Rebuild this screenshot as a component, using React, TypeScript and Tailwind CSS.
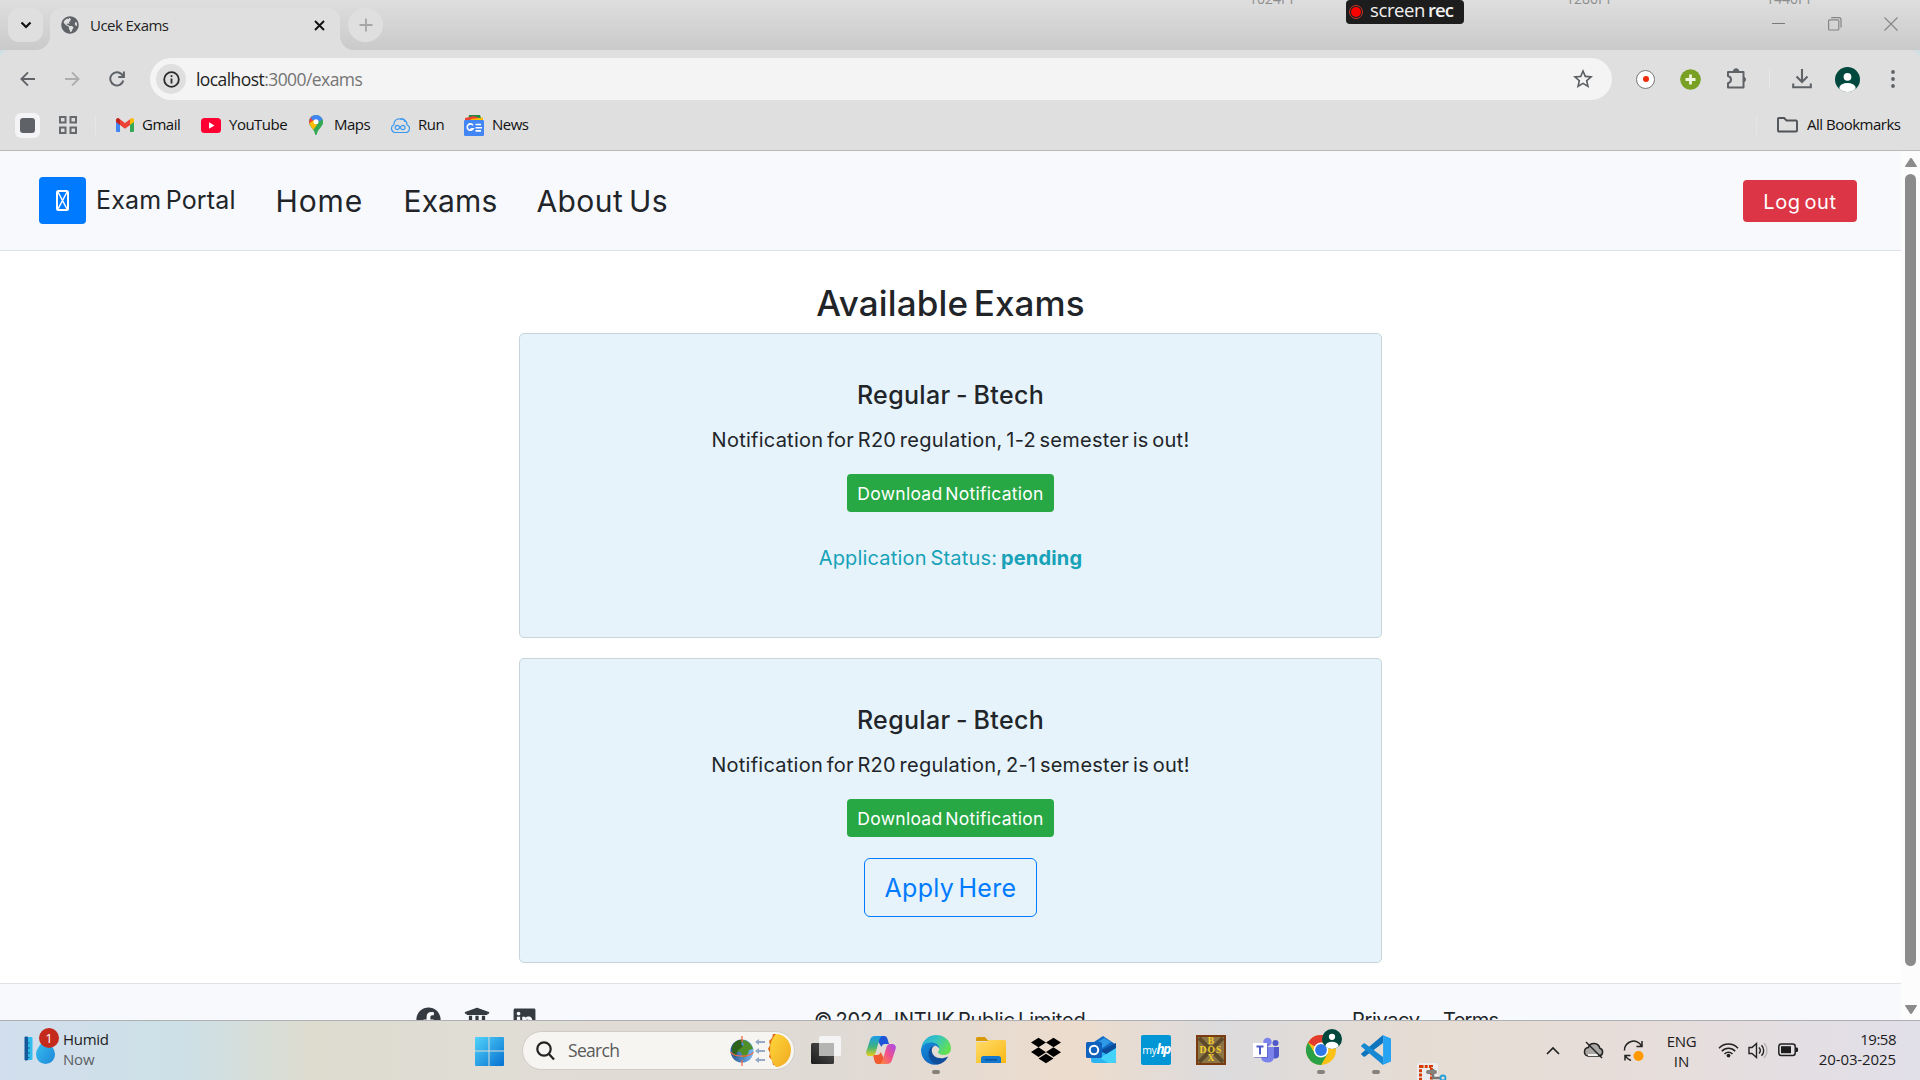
import React from "react";
import type { ReactNode } from "react";
import { FaFacebook, FaLinkedin, FaDropbox, FaUniversity, FaGlobeAmericas } from "react-icons/fa";
import { MdOutlineStarBorder } from "react-icons/md";

const ui = "font-['Open_Sans','Noto_Sans',sans-serif]";
const page = "font-['Inter','Liberation_Sans',sans-serif]";

/* ---------- Browser chrome ---------- */

function TabStrip() {
  return (
    <div className="flex h-[50px] shrink-0 bg-[#dfdfdf]">
      <div className="w-[50px] rounded-br-[14px] bg-linear-to-b from-[#dedede] to-[#cacaca] pt-2 pl-2">
        <div className="flex h-[34px] w-[35px] items-center justify-center rounded-[11px] bg-[#dfdfdf]">
          <svg width="12" height="8" viewBox="0 0 12 8" fill="none" stroke="#111" strokeWidth="2.2">
            <path d="M1.5 1.5 6 6l4.500-4.500" />
          </svg>
        </div>
      </div>
      <div className="w-[290px] bg-linear-to-b from-[#dedede] to-[#cacaca] pt-2">
        <div className="flex h-[42px] items-start rounded-t-[12px] bg-[#dfdfdf] pt-2">
          <FaGlobeAmericas className="ml-[11px] size-[18px] text-[#5f6368]" />
          <span className={`${ui} ml-[11px] w-[214px] text-[15px] leading-[19px] tracking-[-0.55px] text-[#1f1f1f]`}>Ucek Exams</span>
          <svg className="mt-[4px] ml-[10px]" width="11" height="11" viewBox="0 0 11 11" stroke="#111" strokeWidth="1.9">
            <path d="M1 1l9 9M10 1l-9 9" />
          </svg>
        </div>
      </div>
      <div className="flex flex-1 rounded-bl-[14px] bg-linear-to-b from-[#dedede] to-[#cacaca] pt-2 pl-2">
        <div className="flex h-[34px] w-[35px] items-center justify-center rounded-full bg-[#dfdfdf]">
          <svg width="14" height="14" viewBox="0 0 14 14" stroke="#a6a6a6" strokeWidth="1.8">
            <path d="M7 0.500v13M0.500 7h13" />
          </svg>
        </div>
        <div className="mr-[22px] ml-auto flex h-[32px] items-center gap-[42px]">
          <svg width="14" height="14" viewBox="0 0 14 14" stroke="#7a7a7a" strokeWidth="1"><path d="M0 6.500h13" /></svg>
          <svg width="14" height="14" viewBox="0 0 14 14" fill="none" stroke="#858585" strokeWidth="1.200">
            <rect x="0.600" y="2.800" width="10.200" height="10.200" rx="1" />
            <path d="M3.200.7h7.600a2.200 2.200 0 0 1 2.200 2.200v7.600" />
          </svg>
          <svg width="14" height="14" viewBox="0 0 14 14" stroke="#858585" strokeWidth="1.100"><path d="M.5.5l13 13M13.500.5l-13 13" /></svg>
        </div>
      </div>
    </div>
  );
}

function Toolbar() {
  return (
    <div className="h-[50px] shrink-0 bg-[#cfdfe3]">
      <div className="flex h-[58px] items-center rounded-t-[9px] bg-[#dfdfdf]">
        <svg className="ml-5" width="16" height="16" viewBox="0 0 16 16" fill="none" stroke="#5f6368" strokeWidth="1.900"><path d="M15 8H1.500M8 1.300 1.400 8 8 14.700" /></svg>
        <svg className="ml-7" width="16" height="16" viewBox="0 0 16 16" fill="none" stroke="#adadad" strokeWidth="1.900"><path d="M1 8h13.500M8 1.300 14.600 8 8 14.700" /></svg>
        <svg className="ml-[29px]" width="16" height="16" viewBox="0 0 16 16" fill="none" stroke="#5f6368" strokeWidth="2">
          <path d="M14.300 9.500A6.600 6.600 0 1 1 12.700 3.300L14.500 5.200" />
          <path d="M14.900.5v5.500H9.300" />
        </svg>
        <div className="ml-[25px] flex h-[42px] w-[1462px] items-center rounded-full bg-[#f4f4f4]">
          <div className="ml-1.5 flex size-[30px] items-center justify-center rounded-full bg-[#dfdfdf]">
            <svg width="17" height="17" viewBox="0 0 17 17" fill="none" stroke="#2b2b2b" strokeWidth="1.800">
              <circle cx="8.500" cy="8.500" r="7.300" /><path d="M8.500 7.500v5M8.500 4.200v1.900" />
            </svg>
          </div>
          <span className={`${ui} mt-[2px] ml-[10px] text-[17.5px] leading-none tracking-[-0.57px] text-[#1f1f1f]`}>
            localhost<span className="text-[#757575]">:3000/exams</span>
          </span>
          <MdOutlineStarBorder className="mr-[17px] ml-auto size-[24px] text-[#5a5d61]" />
        </div>
        <div className="ml-[24px] flex size-[19px] items-center justify-center rounded-full border border-[#777] bg-white">
          <div className="size-[6px] rounded-full bg-[#ee2c0c]" />
        </div>
        <svg className="ml-[25px]" width="21" height="21" viewBox="0 0 21 21"><circle cx="10.500" cy="10.500" r="10.300" fill="#78a022" /><path d="M10.500 5.500v10M5.500 10.500h10" stroke="#eef4df" strokeWidth="2.800" /></svg>
        <svg className="ml-[25px]" width="22" height="22" viewBox="0 0 22 22" fill="none" stroke="#5f6368" strokeWidth="2" strokeLinejoin="round">
          <path d="M2 4h15.500v15.500H2v-4.200c4-1.200 4-6.300 0-7.300z" />
          <path d="M7.300 3.500a2.800 2.800 0 0 1 5.600 0zM18 9a2.800 2.800 0 0 1 0 5z" fill="#5f6368" strokeWidth="1" />
        </svg>
        <div className="ml-[21px] h-5 w-px bg-[#e8e8e8]" />
        <svg className="ml-[22px]" width="20" height="21" viewBox="0 0 20 21" fill="none" stroke="#5f6368" strokeWidth="2.100">
          <path d="M10 0v12.500M4.500 7.500 10 13l5.500-5.500M1.200 14.500v3.800h17.600v-3.800" />
        </svg>
        <Avatar className="ml-[23px] size-[25px]" />
        <svg className="ml-[31px]" width="4" height="18" viewBox="0 0 4 18" fill="#5f6368"><circle cx="2" cy="2" r="1.900" /><circle cx="2" cy="9" r="1.900" /><circle cx="2" cy="16" r="1.900" /></svg>
      </div>
    </div>
  );
}

function Avatar({ className }: { className: string }) {
  return (
    <svg className={className} viewBox="0 0 25 25">
      <clipPath id="avatar"><circle cx="12.500" cy="12.500" r="12.500" /></clipPath>
      <g clipPath="url(#avatar)">
        <rect width="25" height="25" fill="#00483d" />
        <circle cx="12.500" cy="9.800" r="3.900" fill="#fff" />
        <ellipse cx="12.500" cy="21" rx="8.200" ry="5" fill="#fff" />
      </g>
    </svg>
  );
}

function BookmarksBar() {
  const label = `${ui} -mt-[2px] text-[15px] leading-none tracking-[-0.5px] text-[#111] whitespace-nowrap`;
  return (
    <div className="flex h-[51px] shrink-0 items-center border-b border-[#b9b9b9] bg-[#dfdfdf]">
      <div className="ml-[15px] flex size-[25px] items-center justify-center rounded-md bg-[#f4f4f6]"><div className="size-[15px] rounded-[3px] bg-[#5f6368]" /></div>
      <svg className="ml-[19px]" width="18" height="18" viewBox="0 0 18 18" fill="none" stroke="#66696d" strokeWidth="2">
        <path d="M1 1h5.500v5.500H1zM11.500 1H17v5.500h-5.500zM1 11.500h5.500V17H1zM11.500 11.500H17V17h-5.500z" />
      </svg>
      <div className="ml-[18px] h-5 w-px bg-[#e6e6e6]" />
      <svg className="ml-[20px]" width="18" height="14" viewBox="0 0 18 14">
        <path d="M0 2.500h4V14H1.200A1.200 1.200 0 0 1 0 12.800z" fill="#4285f4" />
        <path d="M14 2.500h4v10.300a1.200 1.200 0 0 1-1.200 1.200H14z" fill="#34a853" />
        <path d="M14 1.200 15 .4c1.200-.9 3-.1 3 1.500v2L14 7z" fill="#fbbc04" />
        <path d="M4 1.300 9 5.100l5-3.800V7l-5 3.800L4 7z" fill="#ea4335" />
        <path d="M0 1.900C0 .4 1.800-.5 3 .4l1 .9V7L0 3.900z" fill="#c5221f" />
      </svg>
      <span className={`${label} ml-[8px] w-[38px]`}>Gmail</span>
      <svg className="ml-[21px]" width="20" height="15" viewBox="0 0 20 15"><rect width="20" height="15" rx="3.500" fill="#ff0033" /><path d="M8 4.300v6.400l5.500-3.200z" fill="#fff" /></svg>
      <span className={`${label} ml-2 w-[58px]`}>YouTube</span>
      <svg className="ml-[22px]" width="14" height="20" viewBox="0 0 14 20">
        <clipPath id="pin"><path d="M7 0a7 7 0 0 1 7 7c0 4.500-4.500 6-6 11.500-.3 2-1.700 2-2 0C4.500 13 0 11.500 0 7a7 7 0 0 1 7-7z" /></clipPath>
        <g clipPath="url(#pin)">
          <rect width="14" height="20" fill="#34a853" />
          <path d="M-1 4 5-1h10v6L7 7 2 11z" fill="#4285f4" />
          <path d="M0 0h4L1.700 3.300 5 6 1 9-1 8z" fill="#ea4335" />
          <path d="M0 8.500 5 5l3 5-4 5z" fill="#fbbc04" />
          <path d="M14 4v5l-4 5-4 6H5l2-8 3-5z" fill="#34a853" />
        </g>
        <circle cx="7" cy="6.800" r="2.500" fill="#fff" />
      </svg>
      <span className={`${label} ml-[11px] w-[36px]`}>Maps</span>
      <svg className="ml-[20px]" width="20" height="18" viewBox="0 0 20 18" fill="none" stroke="#3a99ee" strokeWidth="1.200">
        <path d="M5 16.500h10.500a4 4 0 0 0 1.500-7.700A6 6 0 0 0 9.500 3 5 5 0 0 0 4 8.500a4.200 4.200 0 0 0 1 8z" />
        <path d="M10 3.200A3.500 3.500 0 0 1 15 6" />
        <path d="M10.200 11.500C9 9.800 8.300 9.300 7.400 9.300a2.200 2.200 0 0 0 0 4.400c1.800 0 3.200-4.400 5.400-4.400a2.200 2.200 0 0 1 0 4.400c-1 0-1.700-.6-2.600-2.200z" />
      </svg>
      <span className={`${label} ml-2 w-[27px]`}>Run</span>
      <svg className="ml-[19px]" width="20" height="21" viewBox="0 0 20 21">
        <path d="M5 0h11l2 6H4z" fill="#1e8e3e" /><path d="m1 3 9-2 5 2v4H1z" fill="#ea4335" /><path d="M7 4l12-1.500V8H6z" fill="#fbbc04" />
        <rect y="5" width="20" height="16" rx="1.300" fill="#4285f4" />
        <path d="M9 10.200a3.200 3.200 0 1 0 .2 3.500H6.400M11.500 9.500H17M11.500 12.700H18M11.500 15.900H17" fill="none" stroke="#fff" strokeWidth="1.600" />
      </svg>
      <span className={`${label} ml-2`}>News</span>
      <div className="ml-auto h-5 w-px bg-[#e6e6e6]" />
      <svg className="ml-5" width="21" height="16" viewBox="0 0 21 16" fill="none" stroke="#505357" strokeWidth="1.900"><path d="M1 13.500V2q0-1 1-1h5.200l2.300 2.500H19q1 0 1 1v9q0 1-1 1H2q-1 0-1-1z" /></svg>
      <span className={`${label} mr-[17px] ml-[9px] w-[96px]`}>All Bookmarks</span>
    </div>
  );
}

/* ---------- Web page ---------- */

function SiteHeader() {
  return (
    <header className="flex h-[100px] shrink-0 items-center border-b border-[#dee2e6] bg-[#f8f9fc] text-[#212529]">
      <div className="ml-[39px] flex size-[47px] items-center justify-center rounded-[4px] bg-[#007bff]">
        <svg width="13" height="21" viewBox="0 0 13 21" fill="none" stroke="#fff" strokeWidth="1.500">
          <rect x="1" y="1" width="11" height="19" rx="1.500" strokeWidth="2" /><path d="m2 2 9 17M11 2 2 19" />
        </svg>
      </div>
      <span className="mt-[1px] ml-[10px] w-[179.5px] text-[25px] tracking-[0.2px] [word-spacing:-3px]">Exam Portal</span>
      <nav className="flex text-[30px] leading-none">
        <span className="w-[128px] tracking-[0.9px]">Home</span>
        <span className="w-[133px] tracking-[0.1px]">Exams</span>
        <span className="tracking-[0.4px] [word-spacing:-3px]">About Us</span>
      </nav>
      <button className="mr-[44px] ml-auto h-[42px] w-[114px] rounded-[4px] bg-[#dc3545] pt-[2px] text-[20px] leading-none tracking-[0.6px] text-white [word-spacing:-2.5px]">Log out</button>
    </header>
  );
}

function ExamCard({ semester, children }: { semester: string; children: ReactNode }) {
  return (
    <section className="flex h-[305px] w-[863px] shrink-0 flex-col items-center rounded-[5px] border border-[#c6d5dd] bg-[#e6f3fb] text-[#212529]">
      <h2 className="mt-[46px] text-[25px] leading-[30px] font-[450] tracking-[0.35px] [word-spacing:-1.5px]">Regular - Btech</h2>
      <p className="mt-[15px] text-[20px] leading-[30px] tracking-[0.25px] [word-spacing:-2.2px]">Notification for R20 regulation, {semester} semester is out!</p>
      <button className="mt-[19px] h-[38px] w-[207px] shrink-0 rounded-[4px] bg-[#28a745] pt-[2px] text-[17.5px] leading-none tracking-[0.28px] text-white [word-spacing:-2.5px]">Download Notification</button>
      {children}
    </section>
  );
}

function SiteFooter() {
  return (
    <footer className="flex h-[37px] shrink-0 overflow-hidden border-t border-[#dee2e6] bg-[#f8f9fc] text-[#212529]">
      <FaFacebook className="mt-[23px] ml-[416px] size-[25px] shrink-0 text-[#343a40]" />
      <FaUniversity className="mt-[22px] ml-[23px] size-[26px] shrink-0 text-[#343a40]" />
      <FaLinkedin className="mt-[23px] ml-[22px] size-[25px] shrink-0 text-[#343a40]" />
      <span className="mt-[21px] ml-[277px] w-[538px] text-[20px] leading-[30px] tracking-[-0.2px] [word-spacing:-2px]">© 2024 JNTUK Public Limited</span>
      <span className="mt-[21px] w-[91px] text-[20px] leading-[30px] tracking-[-0.35px]">Privacy</span>
      <span className="mt-[21px] text-[20px] leading-[30px] tracking-[-0.7px]">Terms</span>
    </footer>
  );
}

function Scrollbar() {
  return (
    <div className="flex w-[19px] shrink-0 flex-col items-center bg-[#fcfcfc]">
      <svg className="mt-[7px]" width="12" height="9" viewBox="0 0 12 9" fill="#8b8b8b"><path d="M6 0c.6 0 1 .4 1.300.9L11.800 8c.2.6 0 1-.6 1H.8c-.6 0-.8-.4-.6-1L4.700.9C5 .4 5.400 0 6 0z" /></svg>
      <div className="mt-[7px] h-[792px] w-[11px] rounded-full bg-[#8b8b8b]" />
      <svg className="mt-[39px]" width="12" height="9" viewBox="0 0 12 9" fill="#8b8b8b"><path d="M6 9c.6 0 1-.4 1.300-.9L11.800 1c.2-.6 0-1-.6-1H.8C.2 0 0 .4.2 1l4.500 7.100C5 8.600 5.400 9 6 9z" /></svg>
    </div>
  );
}

/* ---------- Taskbar ---------- */

function Weather() {
  return (
    <div className={`${ui} flex w-[475px] shrink-0`}>
      <svg className="mt-[6px] ml-[24px]" width="36" height="38" viewBox="0 0 36 38">
        <defs><linearGradient id="drop" x1="0" y1="0" x2="1" y2="1"><stop stopColor="#39c5f2" /><stop offset="1" stopColor="#1d86d8" /></linearGradient></defs>
        <rect x="1" y="10" width="7.500" height="23" rx="1" fill="#31bdec" /><path d="M1 10h2.500v23H1zM3 16h2.500M3 21h3M3 26h3M3 30.500h2.500" fill="#155a9a" stroke="#155a9a" strokeWidth="1" />
        <path d="M21.500 10c3 6 9.500 11 9.500 17.500a9.500 9.500 0 0 1-19 0c0-6.500 6.500-11.500 9.500-17.500z" fill="url(#drop)" />
        <circle cx="25" cy="11" r="10" fill="#c42b1c" />
        <text x="25" y="16" textAnchor="middle" fill="#fff" fontFamily="Open Sans" fontSize="13">1</text>
      </svg>
      <div className="mt-[8px] ml-[3px] flex flex-col text-[15px] leading-[20px]">
        <span className="tracking-[-0.3px] text-[#1c1c1c]">Humid</span>
        <span className="tracking-[-0.2px] text-[#5b6064]">Now</span>
      </div>
    </div>
  );
}

function AppSlot({ children, running = false }: { children: ReactNode; running?: boolean }) {
  return (
    <div className="flex w-[55px] shrink-0 flex-col items-center pt-[14px]">
      <div className="flex size-[30px] items-center justify-center">{children}</div>
      {running && <div className="mt-[5px] h-1 w-2 rounded-full bg-[#85817d]" />}
    </div>
  );
}

function SearchBox() {
  return (
    <div className="mt-[10px] flex h-[39px] w-[273px] shrink-0 items-center rounded-full border border-[#cfccc6] bg-[#f6f5f2]">
      <svg className="ml-[13px]" width="19" height="20" viewBox="0 0 19 20" fill="none" stroke="#222" strokeWidth="2.200"><circle cx="8" cy="8" r="6.700" /><path d="m12.700 12.700 5.300 5.800" /></svg>
      <span className={`${ui} ml-[13px] text-[17.5px] leading-none tracking-[-0.7px] text-[#5a5a5a]`}>Search</span>
      <svg className="mr-[2px] ml-auto" width="62" height="35" viewBox="0 0 62 35">
        <defs>
          <linearGradient id="sun" x1="0" x2="1" y2="1"><stop stopColor="#ffd83c" /><stop offset="1" stopColor="#efa820" /></linearGradient>
          <linearGradient id="sea" x1="0" x2="1"><stop stopColor="#28568f" /><stop offset="1" stopColor="#75b8f5" /></linearGradient>
        </defs>
        <circle cx="12" cy="18" r="11.500" fill="url(#sea)" />
        <path d="M3 12c2-5 8-6 10-5l-2 4 3 3-4 4-3 1-1 5C2 21 1 16 3 12z" fill="#2c621c" />
        <path d="M12 7c6 0 10 5 11 9l-4 1-2 6-4 2-2-6-4-1 4-3 3-3z" fill="#508f25" />
        <path d="M12 3v6M12 27v6M.7 19c3 5 19 6 22.600 0" fill="none" stroke="#f36a4a" strokeWidth="1.300" />
        <path d="M25 9l4-3v2h6v2h-6v2zM25 18l4-3v2h6v2h-6v2zM25 27l4-3v2h6v2h-6v2z" fill="#94a9c8" />
        <path d="M46 1h-3l-1 4-3 3 1 4-2 4 2 4-1 4 3 3 1 5h3z" fill="#df6b16" />
        <path d="M46 1c8 0 15 7 15 16s-7 17-15 17c-4-4-6-10-6-17s2-12 6-16z" fill="url(#sun)" />
      </svg>
    </div>
  );
}

function TaskIcons() {
  return (
    <>
      <AppSlot>
        <svg width="30" height="30" viewBox="0 0 30 30">
          <defs><linearGradient id="dark" x1="1" y1="0" x2="0" y2="1"><stop stopColor="#555" /><stop offset="1" stopColor="#1c1c1c" /></linearGradient></defs>
          <rect x="0" y="8" width="23" height="21" rx="1.500" fill="url(#dark)" /><rect x="8" y="1" width="22" height="20" rx="1.500" fill="#f4f4f4" /><rect x="8" y="8" width="15" height="13" fill="#b4b4b2" />
        </svg>
      </AppSlot>
      <AppSlot>
        <svg width="30" height="28" viewBox="0 0 30 28">
          <defs>
            <linearGradient id="cpA" x1="0" y1="0" x2="0" y2="1"><stop stopColor="#1a9bea" /><stop offset=".55" stopColor="#3fb37c" /><stop offset="1" stopColor="#e8cf1c" /></linearGradient>
            <linearGradient id="cpB" x1="1" y1="0" x2="0" y2="1"><stop stopColor="#a24df0" /><stop offset=".5" stopColor="#f0508c" /><stop offset="1" stopColor="#ff8f3c" /></linearGradient>
          </defs>
          <path d="M9 0h9c2 0 3 1 3.500 3l1.500 5h-4c-2 0-3 1-3.600 3z" fill="#1c55d8" />
          <path d="M21 28h-9c-2 0-3-1-3.500-3L7 19h4c2 0 3-1 3.600-3z" fill="#f25a30" />
          <path d="M9 0h7c-2 1-2.500 3-3 5l-3.500 12c-.6 2-2 3-3.500 3H4c-3 0-4.500-2-3.600-5L4 4c.8-2.600 2.400-4 5-4z" fill="url(#cpA)" />
          <path d="M21 28h-7c2-1 2.500-3 3-5l3.500-12c.6-2 2-3 3.500-3h2c3 0 4.500 2 3.600 5L26 24c-.8 2.600-2.400 4-5 4z" fill="url(#cpB)" />
        </svg>
      </AppSlot>
      <AppSlot running>
        <svg width="30" height="30" viewBox="0 0 30 30">
          <defs>
            <linearGradient id="edA" x1="0" x2="1" y2=".5"><stop stopColor="#28a8e0" /><stop offset=".5" stopColor="#36c5c0" /><stop offset="1" stopColor="#63e052" /></linearGradient>
            <linearGradient id="edB" x1="0" x2=".7" y2="1"><stop stopColor="#168fdc" /><stop offset="1" stopColor="#0f5fb8" /></linearGradient>
          </defs>
          <path d="M.3 12.500C1.600 5.500 7.500 0 15 0c8.500 0 15 6 15 13.500 0 4-3.200 6.500-7 6.500-4 0-6-1.600-6-2.800 0-.8 1.200-1.200 1.200-3.200 0-3-3.400-5.500-8-5.500-4.200 0-7.700 1.500-9.900 4z" fill="url(#edA)" />
          <path d="M0 15c0-4 4.500-7.500 10-7.500 4.500 0 8.200 2.300 8.200 6 0 0-1.500-2.800-4.200-2.800-3 0-4.500 2.600-4.500 5.600 0 6 5 10.700 10 12.200-10 4.500-19.500-3.500-19.500-13.500z" fill="url(#edB)" />
          <path d="M14 10.800c-3 .8-3.500 3.600-3 6.200 1 5 8 8.500 16.200 4.500C25 26 20.500 29.500 15.500 29.300 9 27 6.500 20.500 8 15.500c1-3 3.500-4.900 6-4.700z" fill="#0f4c9c" />
        </svg>
      </AppSlot>
      <AppSlot>
        <svg width="30" height="30" viewBox="0 0 30 30">
          <defs><linearGradient id="fold" x2="1" y2="1"><stop stopColor="#ffdc6b" /><stop offset="1" stopColor="#fbb813" /></linearGradient></defs>
          <path d="M0 3.500Q0 2 1.500 2H9l3.500 4H0z" fill="#d99a08" /><path d="M0 7h10l3-2h15.500Q30 5 30 6.500V28H0z" fill="url(#fold)" />
          <path d="M5 28v-4.500Q5 21 7.500 21h15q2.500 0 2.500 2.500V28z" fill="#1379cf" /><path d="M9 24.800h12" stroke="#0a4f93" strokeWidth="1.300" />
        </svg>
      </AppSlot>
      <AppSlot><FaDropbox className="size-[31px] text-black" /></AppSlot>
      <AppSlot>
        <svg width="30" height="28" viewBox="0 0 30 28">
          <path d="M5 8 17 0l12 8v6H5z" fill="#1269c2" /><path d="m9 8 9-6 7 4-13 9z" fill="#2f9be8" /><path d="M12 16 30 7v18q0 2-2 2H12z" fill="#0b4b9a" />
          <path d="M5 15h9l16 8v2q0 2-2 2H8q-3 0-3-3z" fill="#2bb3f2" /><path d="m30 12-16 10 8 5h5.500q2.500 0 2.500-2.500z" fill="#43d2fa" />
          <rect y="6" width="16" height="16" rx="1.500" fill="#1062bd" /><circle cx="8" cy="14" r="4.200" fill="none" stroke="#fff" strokeWidth="2" />
        </svg>
      </AppSlot>
      <AppSlot>
        <div className="flex size-[30px] items-center justify-center rounded-[2px] bg-[#0096d6] font-['Open_Sans'] text-[10.5px] leading-none tracking-[-0.4px] text-white">
          my<span className="text-[13.5px] font-bold tracking-[-1.5px] italic">hp</span>
        </div>
      </AppSlot>
      <AppSlot>
        <div className="relative size-[30px] border-2 border-[#7a3b10] bg-[#8b7446] font-['Liberation_Serif'] text-[9.5px] leading-[8.500px] font-bold text-[#f3cf2b]">
          <svg className="absolute inset-0" width="26" height="26" viewBox="0 0 26 26" stroke="#5d4a2a" strokeWidth="4"><path d="m1 1 24 24M25 1 1 25" /></svg>
          <div className="relative flex h-full flex-col items-center justify-center"><span>B</span><span className="tracking-[1.200px]">DOS</span><span>X</span></div>
        </div>
      </AppSlot>
      <AppSlot>
        <svg width="30" height="26" viewBox="0 0 30 26">
          <circle cx="16.500" cy="5" r="4.200" fill="#7b83eb" /><circle cx="24.500" cy="6" r="3" fill="#5059c9" />
          <path d="M21 10h7v8q0 3.500-4 3.500h-3z" fill="#5059c9" /><path d="M10 10h13v9q0 6.500-6.500 6.500T10 19z" fill="#7b83eb" />
          <rect x="3" y="7" width="14" height="14" fill="#4a4fb0" opacity=".5" /><rect x="2" y="6" width="14" height="14" fill="#fff" /><path d="M5.500 9.500h7M9 9.500v8" stroke="#5059c9" strokeWidth="2" />
        </svg>
      </AppSlot>
      <AppSlot running>
        <div className="relative size-[30px]">
          <svg width="30" height="30" viewBox="0 0 30 30">
            <circle cx="15" cy="15" r="15" fill="#fbc116" />
            <path d="M15 15 2 7.500a15 15 0 0 1 26 0H15z" fill="#e33b2e" /><path d="M2 7.500A15 15 0 0 0 15 30l6.500-11.300L15 15l-6 3.500z" fill="#2aa147" />
            <circle cx="15" cy="15" r="7.400" fill="#fff" /><circle cx="15" cy="15" r="5.900" fill="#2f78ea" />
          </svg>
          <Avatar className="absolute -top-[6px] left-[16px] size-[20px]" />
        </div>
      </AppSlot>
      <AppSlot running>
        <svg width="30" height="30" viewBox="0 0 30 30">
          <path d="M22 0v8L4 21.500q-.8.500-1.500 0L.5 19.800q-.8-.8 0-1.600z" fill="#0d74bd" />
          <path d="M22 30v-8L4 8.500q-.8-.5-1.500 0L.5 10.200q-.8.800 0 1.600z" fill="#1689d2" />
          <path d="M21.500 0 30 3.500v23L21.500 30q.6-.8.600-2.200V2.200Q22.100.8 21.500 0z" fill="#26a3f2" />
        </svg>
      </AppSlot>
      <div className="flex w-[55px] shrink-0 items-end justify-center">
        <svg width="31" height="18" viewBox="0 0 31 18">
          <path d="M1 18V4q0-3 3-3h15q3 0 3 3v14z" fill="#ececee" />
          <rect x="4.500" y="4.500" width="11" height="15" fill="none" stroke="#d83b01" strokeWidth="3" strokeDasharray="3 1.200" />
          <path d="M17 7v9h7" fill="none" stroke="#777" strokeWidth="2.500" /><rect x="10" y="8" width="11" height="4" rx="2" fill="#85817d" /><circle cx="27" cy="16" r="2.500" fill="none" stroke="#27a0d8" strokeWidth="1.800" />
        </svg>
      </div>
    </>
  );
}

function Tray() {
  return (
    <div className={`${ui} mr-[24px] ml-auto flex text-[15px] leading-[20px] text-[#1c1c1c]`}>
      <svg className="mt-[25px]" width="14" height="9" viewBox="0 0 14 9" fill="none" stroke="#222" strokeWidth="1.700"><path d="m1 8 6-6 6 6" /></svg>
      <svg className="mt-[20px] ml-[23px]" width="21" height="19" viewBox="0 0 21 19" fill="none" stroke="#222" strokeWidth="1.500">
        <path d="M5 15h11a4 4 0 0 0 .8-7.800A6 6 0 0 0 5.300 6.500 4.300 4.300 0 0 0 5 15z" fill="#aaa7a4" /><path d="M5 14h10" stroke="#eee" strokeWidth="2" /><path d="m3 1 16 16" />
      </svg>
      <svg className="mt-[19px] ml-[19px]" width="22" height="22" viewBox="0 0 22 22" fill="none" stroke="#222" strokeWidth="1.500">
        <path d="M1.500 10.500A9 9 0 0 1 18.500 6M19 1v5.500h-5.500M8 20.500a9 9 0 0 1-5.500-4.500M2 20.500v-5h5.500" /><circle cx="15.500" cy="16" r="5" fill="#ff9800" stroke="none" />
      </svg>
      <div className="mt-[10px] ml-[21px] flex w-[31px] flex-col items-center"><span className="tracking-[-0.4px]">ENG</span><span>IN</span></div>
      <svg className="mt-[21px] ml-[21px]" width="21" height="16" viewBox="0 0 21 16" fill="none" stroke="#222" strokeWidth="1.500">
        <path d="M1 6.200a13 13 0 0 1 19 0M3.800 9.200a9 9 0 0 1 13.400 0M6.500 12a5.500 5.500 0 0 1 8 0" /><circle cx="10.500" cy="13.600" r="1.900" fill="#222" stroke="none" />
      </svg>
      <svg className="mt-[21px] ml-[9px]" width="21" height="17" viewBox="0 0 21 17" fill="none" stroke="#222" strokeWidth="1.400">
        <path d="M1 5.500h3L8.500 1.500v14L4 11.500H1zM11 5.500a4.500 4.500 0 0 1 0 6M13.500 3.200a7.500 7.500 0 0 1 0 10.600" /><path d="M16 1a11 11 0 0 1 0 15" stroke="#bbb6b6" />
      </svg>
      <svg className="mt-[22px] ml-[9px]" width="21" height="14" viewBox="0 0 21 14"><rect x=".8" y="1" width="16.400" height="11.500" rx="2.500" fill="none" stroke="#222" strokeWidth="1.500" /><rect x="3" y="3.200" width="10" height="7" fill="#1c1c1c" /><path d="M18 4.500h.8q1.200 0 1.200 1.200v2q0 1.300-1.200 1.300H18z" fill="#1c1c1c" /></svg>
      <div className="mt-[8px] ml-[19px] flex w-[78px] flex-col items-end whitespace-nowrap"><span className="tracking-[-0.5px]">19:58</span><span className="tracking-[-0.1px]">20-03-2025</span></div>
    </div>
  );
}

function Taskbar() {
  return (
    <div className="flex h-[60px] shrink-0 overflow-hidden border-t border-[#aeb0b4] bg-[linear-gradient(90deg,#d2deed_0px,#cde0e7_180px,#dddccf_310px,#e0ddd5_500px,#e0dad5_850px,#ecdccd_1080px,#dcdbdd_1220px,#e5dcd3_1420px,#e7dedb_1650px,#e1dfe9_1920px)]">
      <Weather />
      <svg className="mt-[15px] mr-[17px] shrink-0" width="30" height="30" viewBox="0 0 30 30">
        <defs><linearGradient id="win" x2="1" y2="1"><stop stopColor="#52d3fb" /><stop offset="1" stopColor="#0670d0" /></linearGradient></defs>
        <path d="M0 2q0-1 1-1h12.500v13.500H0zM14.500 1h13.500q1 0 1 1v12.500H14.500zM0 15.500h13.500V30H1q-1 0-1-1zM14.500 15.500H29V29q0 1-1 1H14.500z" fill="url(#win)" />
      </svg>
      <SearchBox />
      <div className="ml-[3.500px] flex shrink-0"><TaskIcons /></div>
      <Tray />
    </div>
  );
}

/* ---------- Overlays ---------- */

function Overlays() {
  const tick = `${ui} absolute -top-[10px] text-[14px] leading-[18px] text-[#8d8d8d] tracking-[0px]`;
  return (
    <>
      <span className={`${tick} left-[1249px]`}>1024PI</span>
      <span className={`${tick} left-[1566px]`}>1280PI</span>
      <span className={`${tick} left-[1766px]`}>1440PI</span>
      <div className={`${ui} absolute top-0 left-[1346px] flex h-6 w-[118px] items-center rounded-[4px] bg-[#1d1d1d] text-[18.5px] leading-none text-[#f1f1f1]`}>
        <div className="ml-[3px] flex size-[14px] items-center justify-center rounded-full border border-[#c8332c]"><div className="size-[10px] rounded-full bg-[#ff0000]" /></div>
        <span className="-mt-[4px] ml-[7px] tracking-[-0.4px]">screen</span><span className="-mt-[4px] ml-[3px] font-semibold tracking-[-0.9px]">rec</span>
      </div>
    </>
  );
}

export default function App() {
  return (
    <div className="relative flex h-[1080px] w-[1920px] flex-col overflow-hidden bg-white">
      <TabStrip />
      <Toolbar />
      <BookmarksBar />
      <div className={`${page} flex min-h-0 flex-1`}>
        <div className="flex min-w-0 flex-1 flex-col">
          <SiteHeader />
          <main className="flex min-h-0 flex-1 flex-col items-center">
            <h1 className="mt-[31px] mb-[8px] text-[35px] leading-[43px] font-[450] tracking-[0.15px] text-[#212529] [word-spacing:-4px]">Available Exams</h1>
            <ExamCard semester="1-2">
              <p className="mt-[31px] text-[20px] leading-[30px] tracking-[0.18px] text-[#17a2b8] [word-spacing:-2px]">Application Status: <strong className="font-bold">pending</strong></p>
            </ExamCard>
            <div className="h-5 shrink-0" />
            <ExamCard semester="2-1">
              <button className="mt-[21px] h-[59px] w-[173px] shrink-0 rounded-[6px] border border-[#007bff] pt-[2px] text-[25px] leading-none tracking-[0.3px] text-[#007bff] [word-spacing:-3px]">Apply Here</button>
            </ExamCard>
          </main>
          <SiteFooter />
        </div>
        <Scrollbar />
      </div>
      <Taskbar />
      <Overlays />
    </div>
  );
}
